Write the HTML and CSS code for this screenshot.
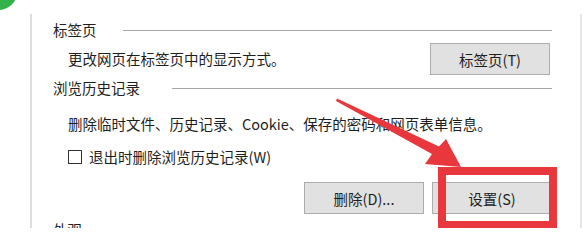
FILE: index.html
```html
<!DOCTYPE html>
<html lang="zh-CN">
<head>
<meta charset="utf-8">
<title>Internet 选项</title>
<link rel="stylesheet" href="styles.css">
</head>
<body>
<div class="page">
  <div class="panel">
    <div class="group-title"><span>标签页</span><i class="rule"></i></div>
    <div class="row row-tabs">
      <span class="desc">更改网页在标签页中的显示方式。</span>
      <button class="btn">标签页(T)</button>
    </div>
    <div class="group-title title-history"><span>浏览历史记录</span><i class="rule"></i></div>
    <div class="desc desc-history">删除临时文件、历史记录、Cookie、保存的密码和网页表单信息。</div>
    <label class="check-row"><span class="checkbox"></span><span>退出时删除浏览历史记录(W)</span></label>
    <div class="btn-row">
      <button class="btn">删除(D)...</button>
      <button class="btn">设置(S)</button>
    </div>
    <div class="group-title title-look"><span>外观</span><i class="rule"></i></div>
  </div>

  <div class="green-dot"></div>
  <svg class="arrow" width="587" height="228" viewBox="0 0 587 228">
    <polygon points="337,98.5 439,146.5 446,139 461,167 425,164 432,154 336,101" fill="#e8383d"/>
  </svg>
  <div class="highlight"></div>
</div>
</body>
</html>
```
FILE: styles.css
```css
html, body {
  margin: 0;
  padding: 0;
  background: #ffffff;
}
body {
  width: 587px;
  height: 228px;
  overflow: hidden;
  font-family: "Noto Sans CJK SC", "Noto Sans", sans-serif;
  font-size: 14.5px;
  color: #1e1e1e;
}
.page {
  position: relative;
  width: 587px;
  height: 228px;
  overflow: hidden;
}
.panel {
  margin: 14px 0 0 30px;
  width: 499px;
  height: 260px;
  border-left: 2px solid #dedede;
  border-right: 2px solid #e6e6e6;
  padding: 6px 28px 0 21px;
}
.group-title {
  display: flex;
  align-items: center;
  height: 20px;
  line-height: 20px;
  gap: 26px;
}
.group-title .rule {
  flex: 1;
  height: 0;
  border-top: 1px solid #a6a6a6;
}
.row-tabs {
  display: flex;
  align-items: center;
  justify-content: space-between;
  margin-top: 3px;
  padding-left: 15px;
  padding-right: 2px;
  height: 32px;
}
.desc {
  line-height: 20px;
}
.btn {
  width: 120px;
  height: 32px;
  padding: 0;
  background: #e1e1e1;
  border: 1px solid #adadad;
  font-family: inherit;
  font-size: 14.5px;
  color: #1e1e1e;
}
.title-history {
  margin-top: 3px;
  gap: 32px;
}
.desc-history {
  margin-top: 16px;
  padding-left: 15px;
  height: 20px;
}
.check-row {
  display: flex;
  align-items: center;
  gap: 7px;
  margin-top: 13px;
  padding-left: 15px;
  height: 20px;
  line-height: 20px;
}
.checkbox {
  width: 12px;
  height: 12px;
  border: 1px solid #333333;
  background: #fff;
}
.btn-row {
  display: flex;
  justify-content: flex-end;
  gap: 8px;
  margin-top: 15px;
}
.title-look {
  margin-top: 6px;
}
.green-dot {
  position: absolute;
  left: -22px;
  top: -30px;
  width: 40px;
  height: 40px;
  border-radius: 50%;
  background: #34b24a;
}
.arrow {
  position: absolute;
  left: 0;
  top: 0;
}
.highlight {
  position: absolute;
  left: 438px;
  top: 167px;
  width: 119px;
  height: 62px;
  box-sizing: border-box;
  border: 8px solid #e8383d;
}
```
